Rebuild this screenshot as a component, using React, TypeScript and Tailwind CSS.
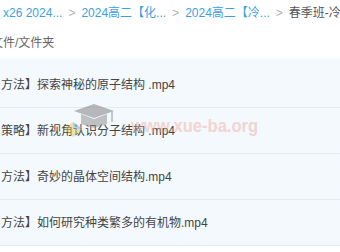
import React from "react";

const rows = [
  "方法】探索神秘的原子结构 .mp4",
  "策略】新视角认识分子结构 .mp4",
  "方法】奇妙的晶体空间结构.mp4",
  "方法】如何研究种类繁多的有机物.mp4",
];

export default function App() {
  return (
    <div
      className="relative w-[340px] h-[252px] overflow-hidden bg-white"
      style={{ fontFamily: '"Liberation Sans", "Noto Sans CJK SC", sans-serif' }}
    >
      <div className="h-[25px] flex items-center whitespace-nowrap text-[12px] pl-[3px]">
        <span className="text-[#3d9fe2]">x26 2024...</span>
        <span className="text-[#b0b0b0] mx-[6px]">&gt;</span>
        <span className="text-[#3d9fe2]">2024高二【化...</span>
        <span className="text-[#b0b0b0] mx-[6px]">&gt;</span>
        <span className="text-[#3d9fe2]">2024高二【冷...</span>
        <span className="text-[#b0b0b0] mx-[6px]">&gt;</span>
        <span className="text-[#555]">春季班-冷门</span>
      </div>
      <div className="h-[33px] pt-[3px] flex items-center whitespace-nowrap text-[12px] text-[#666] ml-[-9px]">
        文件/文件夹
      </div>
      <div className="bg-[#f4f9fd] pt-[4px]">
        {rows.map((r) => (
          <div
            key={r}
            className="h-[46px] flex items-center border-b border-[#e2eaf2] whitespace-nowrap text-[12px] text-[#444] pl-[1px]"
          >
            {r}
          </div>
        ))}
      </div>
      <svg
        className="absolute left-[62px] top-[102px] opacity-50"
        width="56"
        height="38"
        viewBox="0 0 56 38"
      >
        <polygon points="12,9 32,2 52,9 32,16" fill="#777" />
        <polygon points="19,12 32,17 45,12 45,22 32,26 19,22" fill="#8a8a8a" />
        <line x1="50" y1="9" x2="50" y2="20" stroke="#777" strokeWidth="1.5" />
        <polygon points="2,27 11,20 21,27 11,35" fill="#e8c85a" />
        <polygon points="11,20 21,27 11,27" fill="#6ab0e0" />
      </svg>
      <div
        className="absolute left-[131px] top-[112px] text-[19px] font-bold text-[#f0a89c] opacity-45 whitespace-nowrap origin-left scale-x-[0.87]"
        style={{ fontFamily: '"Liberation Sans", sans-serif' }}
      >
        www.xue-ba.org
      </div>
    </div>
  );
}
